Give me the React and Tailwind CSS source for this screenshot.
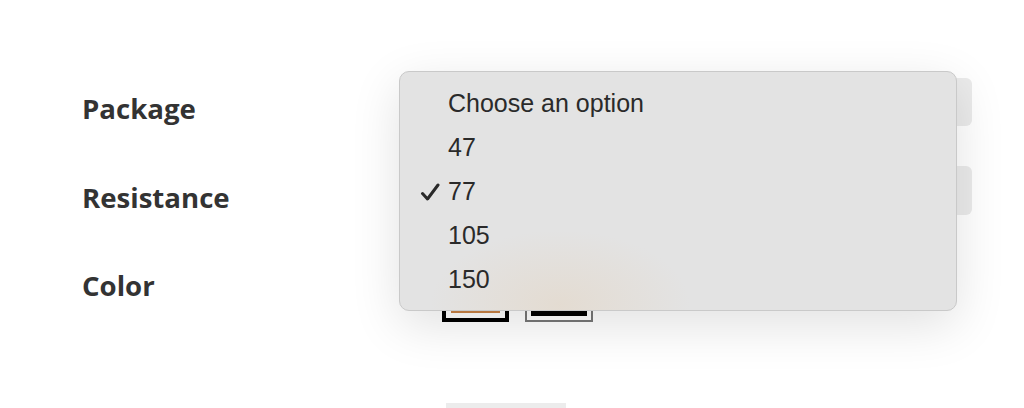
import React from 'react';

const options = ['Choose an option', '47', '77', '105', '150'];
const selected = '77';

const Check = () => (
  <svg width="20" height="18" viewBox="0 0 20 18" className="text-[#2a2a2a]">
    <path d="M2.5 10.5 L7.5 16 L18 2" fill="none" stroke="currentColor" strokeWidth="3" strokeLinecap="round" strokeLinejoin="round" />
  </svg>
);

const labelCls = "w-[360px] shrink-0 font-['Open_Sans',sans-serif] font-bold text-[27.6px] leading-[32px] text-[#333]";

const App = () => {
  return (
    <div className="relative w-[1024px] h-[408px] overflow-hidden bg-white">
      <div className="pl-[82px] pt-[78px] flex flex-col">
        <div className="flex items-start h-12">
          <div className={`${labelCls} mt-[14px]`}>Package</div>
          <div className="w-[530px] h-12 rounded-md bg-[#ebebeb]"></div>
        </div>
        <div className="flex items-start h-[49px] mt-10">
          <div className={`${labelCls} mt-[15px]`}>Resistance</div>
          <div className="w-[530px] h-[49px] rounded-md bg-[#ebebeb]"></div>
        </div>
        <div className="flex items-start h-[67px] mt-10">
          <div className={`${labelCls} mt-[14px]`}>Color</div>
          <div className="flex gap-4">
            <div className="w-[67px] h-[67px] border-4 border-black bg-white px-[5px] pt-[5px] pb-[5px]">
              <div className="w-full h-full bg-[#c98346]"></div>
            </div>
            <div className="w-[68px] h-[67px] border-2 border-[#777] bg-white p-1">
              <div className="w-full h-full bg-black"></div>
            </div>
          </div>
        </div>
        <div className="pl-[364px] mt-[81px]">
          <div className="w-[120px] h-10 bg-[#ececec]"></div>
        </div>
      </div>

      <div className="absolute left-[399px] top-[71px] w-[558px] h-[240px] rounded-[10px] border border-[#c9c9c9] bg-[#e3e3e3] shadow-[0_14px_50px_rgba(0,0,0,0.12)] overflow-hidden">
        <div className="absolute left-[30px] bottom-[-70px] w-[260px] h-[150px] rounded-full bg-[radial-gradient(closest-side,rgba(228,212,192,0.5),rgba(227,227,227,0))]"></div>
        <ul className="relative pt-[10px] font-['Liberation_Sans',Arial,sans-serif] text-[25px] text-[#2a2a2a]">
          {options.map((opt) => (
            <li key={opt} className="h-11 flex items-center">
              <span className="w-12 flex justify-end pr-[8px]">{opt === selected && <Check />}</span>
              <span>{opt}</span>
            </li>
          ))}
        </ul>
      </div>
    </div>
  );
};

export default App;
